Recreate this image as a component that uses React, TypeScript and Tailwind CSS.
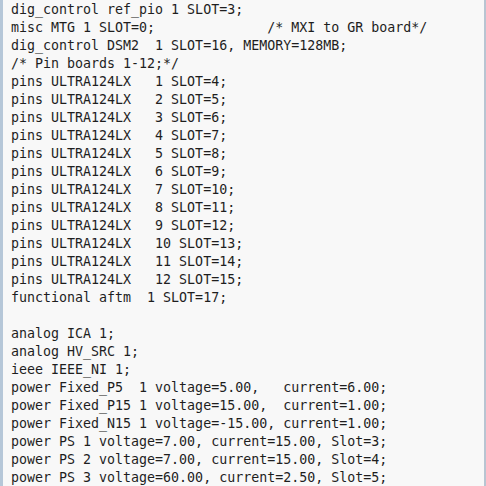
import React from "react";

const lines = [
  "dig_control ref_pio 1 SLOT=3;",
  "misc MTG 1 SLOT=0;              /* MXI to GR board*/",
  "dig_control DSM2  1 SLOT=16, MEMORY=128MB;",
  "/* Pin boards 1-12;*/",
  "pins ULTRA124LX   1 SLOT=4;",
  "pins ULTRA124LX   2 SLOT=5;",
  "pins ULTRA124LX   3 SLOT=6;",
  "pins ULTRA124LX   4 SLOT=7;",
  "pins ULTRA124LX   5 SLOT=8;",
  "pins ULTRA124LX   6 SLOT=9;",
  "pins ULTRA124LX   7 SLOT=10;",
  "pins ULTRA124LX   8 SLOT=11;",
  "pins ULTRA124LX   9 SLOT=12;",
  "pins ULTRA124LX   10 SLOT=13;",
  "pins ULTRA124LX   11 SLOT=14;",
  "pins ULTRA124LX   12 SLOT=15;",
  "functional aftm  1 SLOT=17;",
  "",
  "analog ICA 1;",
  "analog HV_SRC 1;",
  "ieee IEEE_NI 1;",
  "power Fixed_P5  1 voltage=5.00,   current=6.00;",
  "power Fixed_P15 1 voltage=15.00,  current=1.00;",
  "power Fixed_N15 1 voltage=-15.00, current=1.00;",
  "power PS 1 voltage=7.00, current=15.00, Slot=3;",
  "power PS 2 voltage=7.00, current=15.00, Slot=4;",
  "power PS 3 voltage=60.00, current=2.50, Slot=5;",
];

export default function App() {
  return (
    <div className="w-[486px] h-[486px] overflow-hidden bg-[#f8f8f8] border-l-[3px] border-r-[2px] border-l-[#b6c7d8] border-r-[#b8c5d2]">
      <pre className="pl-[8px] pt-[1px] font-['DejaVu_Sans_Mono',monospace] text-[13.3px] leading-[18px] text-[#1e1e1e] whitespace-pre">
        {lines.map((line, i) => (
          <div key={i} className="h-[18px]">
            {line}
          </div>
        ))}
      </pre>
    </div>
  );
}
